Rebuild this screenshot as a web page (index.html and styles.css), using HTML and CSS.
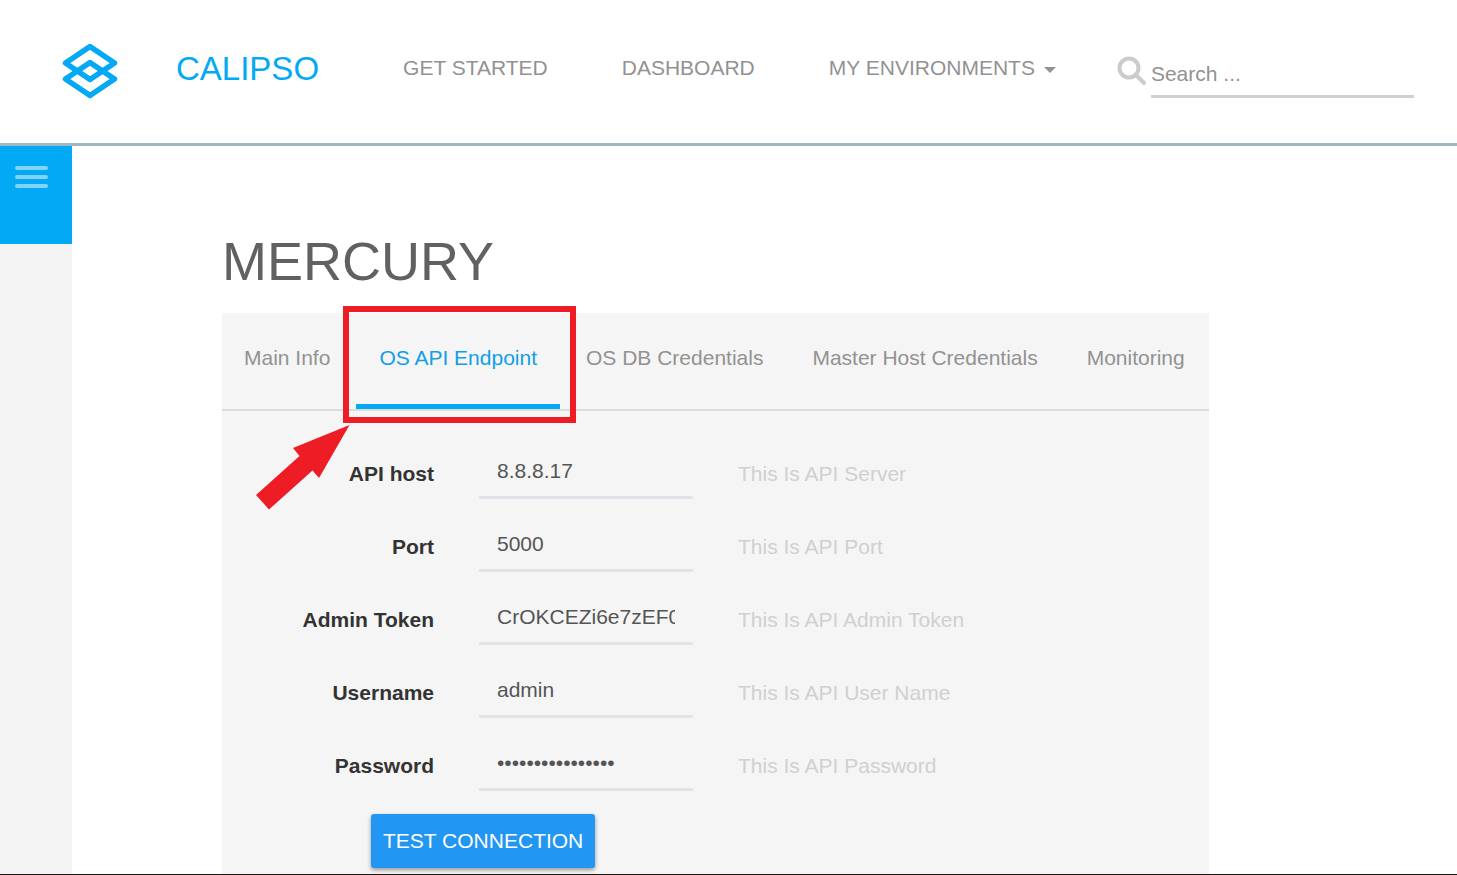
FILE: index.html
```html
<!DOCTYPE html>
<html lang="en">
<head>
<meta charset="utf-8">
<title>Calipso - Mercury</title>
<link rel="stylesheet" href="styles.css">
</head>
<body>
<header class="header">
  <a class="brand" href="#">
    <svg class="brand-logo" width="56" height="56" viewBox="0 0 56 56" fill="none" stroke="currentColor" stroke-width="5.500" stroke-linejoin="round" aria-hidden="true">
      <path d="M28 3.500 52.500 20 28 36.500 3.500 20Z"/>
      <path d="M28 19.500 52.500 36 28 52.500 3.500 36Z"/>
    </svg>
    <span class="brand-name">CALIPSO</span>
  </a>
  <nav class="nav">
    <a class="nav-link" href="#">GET STARTED</a>
    <a class="nav-link" href="#">DASHBOARD</a>
    <a class="nav-link" href="#">MY ENVIRONMENTS<span class="caret"></span></a>
  </nav>
  <form class="search">
    <svg class="search-icon" width="30" height="30" viewBox="0 0 30 30" fill="none" stroke="currentColor" aria-hidden="true">
      <circle cx="12" cy="12" r="9.500" stroke-width="4"/>
      <path d="M18.500 18.500 27 27" stroke-width="4" stroke-linecap="round"/>
    </svg>
    <input class="search-input" type="text" placeholder="Search ..." aria-label="Search">
  </form>
</header>
<div class="page">
  <aside class="sidebar">
    <button class="menu-button" type="button" aria-label="Menu">
      <span class="menu-line"></span><span class="menu-line"></span><span class="menu-line"></span>
    </button>
  </aside>
  <main class="main">
    <h1 class="title">MERCURY</h1>
    <section class="panel">
      <div class="tabs" role="tablist">
        <button class="tab tab-first" type="button" role="tab">Main Info</button>
        <div class="tab-current">
          <button class="tab tab-active" type="button" role="tab" aria-selected="true">OS API Endpoint</button>
          <span class="highlight"></span>
          <svg class="arrow" width="94" height="85" viewBox="0 0 94 85" aria-hidden="true">
            <path d="M93.500 0 37 23 43.500 31 0 70 13 84.500 56.500 45.500 63 53Z" fill="currentColor"/>
          </svg>
        </div>
        <button class="tab" type="button" role="tab">OS DB Credentials</button>
        <button class="tab" type="button" role="tab">Master Host Credentials</button>
        <button class="tab" type="button" role="tab">Monitoring</button>
      </div>
      <form class="form">
        <div class="row">
          <label class="label" for="host">API host</label>
          <input class="field" id="host" type="text" value="8.8.8.17">
          <span class="hint">This Is API Server</span>
        </div>
        <div class="row">
          <label class="label" for="port">Port</label>
          <input class="field" id="port" type="text" value="5000">
          <span class="hint">This Is API Port</span>
        </div>
        <div class="row">
          <label class="label" for="token">Admin Token</label>
          <input class="field" id="token" type="text" value="CrOKCEZi6e7zEF0">
          <span class="hint">This Is API Admin Token</span>
        </div>
        <div class="row">
          <label class="label" for="user">Username</label>
          <input class="field" id="user" type="text" value="admin">
          <span class="hint">This Is API User Name</span>
        </div>
        <div class="row">
          <label class="label" for="password">Password</label>
          <input class="field" id="password" type="password" value="abcdefghijklmnop">
          <span class="hint">This Is API Password</span>
        </div>
        <button class="test-button" type="button">TEST CONNECTION</button>
      </form>
    </section>
  </main>
</div>
</body>
</html>
```
FILE: styles.css
```css
* {
  box-sizing: border-box;
}

body {
  display: flex;
  flex-direction: column;
  min-height: 100vh;
  margin: 0;
  border-bottom: 1px solid #1c170c;
  background: #fff;
  color: #929292;
  font-family: "Liberation Sans", Arial, sans-serif;
  font-size: 21px;
  line-height: 24px;
}

button,
input {
  border: 0;
  background: none;
  color: inherit;
  font: inherit;
}

.header {
  display: flex;
  align-items: center;
  padding: 43px 43px 44px 62px;
  border-bottom: 3px solid #a0b7bf;
}

.brand {
  display: flex;
  align-items: center;
  gap: 58px;
  color: #03a9f4;
  text-decoration: none;
}

.brand-logo {
  display: block;
}

.brand-name {
  padding-bottom: 4px;
  font-size: 33px;
  line-height: 40px;
}

.nav {
  display: flex;
  gap: 74px;
  padding-bottom: 6px;
  margin-left: 84px;
}

.nav-link {
  color: inherit;
  text-decoration: none;
  white-space: nowrap;
}

.caret {
  display: inline-block;
  margin-left: 9px;
  border: 6px solid transparent;
  border-top-color: currentColor;
  border-bottom: 0;
  vertical-align: 2px;
}

.search {
  display: flex;
  flex: 1;
  align-items: center;
  gap: 4px;
  min-width: 0;
  margin-left: 61px;
}

.search-icon {
  flex: none;
  color: #cbcbcb;
}

.search-input {
  flex: 1;
  min-width: 0;
  height: 54px;
  padding: 8px 0 0;
  border-bottom: 3px solid #d0d0d0;
}

.search-input::placeholder {
  color: #929292;
  opacity: 1;
}

.page {
  display: flex;
  flex: 1;
}

.sidebar {
  flex: none;
  width: 72px;
  background: #f4f4f4;
}

.menu-button {
  display: flex;
  flex-direction: column;
  gap: 5px;
  width: 100%;
  height: 98px;
  padding: 20px 24px 0 15px;
  background: #03a9f4;
}

.menu-line {
  width: 100%;
  height: 4px;
  border-radius: 2px;
  background: #80d4f9;
}

.main {
  display: flex;
  flex: 1;
  flex-direction: column;
  padding: 84px 248px 0 150px;
}

.title {
  margin: 0;
  color: #616161;
  font-size: 54px;
  font-weight: 400;
  line-height: 62px;
}

.panel {
  flex: 1;
  margin-top: 21px;
  background: #f5f5f5;
}

.tabs {
  display: flex;
  gap: 3px;
  border-bottom: 2px solid #dcdcdc;
}

.tab {
  height: 96px;
  padding: 0 23px 7px;
  white-space: nowrap;
}

.tab-first {
  padding-left: 22px;
}

.tab-current {
  position: relative;
}

.tab-active {
  padding-bottom: 2px;
  border-bottom: 5px solid #03a9f4;
  color: #119fe8;
}

.highlight {
  position: absolute;
  inset: -7px -16px -14px -13px;
  border: 6px solid #ee1c24;
}

.arrow {
  position: absolute;
  top: 112px;
  left: -100px;
  color: #ee1c24;
}

.form {
  display: flex;
  flex-direction: column;
  gap: 19px;
  padding: 34px 0 6px;
}

.row {
  display: grid;
  grid-template-columns: 212fr 214fr 471fr;
  gap: 45px;
  align-items: center;
}

.label {
  padding-top: 3px;
  color: #333;
  font-weight: 700;
  text-align: right;
}

.field {
  width: 100%;
  min-width: 0;
  height: 54px;
  padding: 1px 18px 0;
  border-bottom: 3px solid #e2e3e9;
  color: #555;
}

.hint {
  padding-top: 3px;
  color: #d0d0d0;
}

.test-button {
  align-self: flex-start;
  height: 54px;
  margin: 4px 0 0 149px;
  padding: 0 12px;
  border-radius: 3px;
  background: #2196f3;
  box-shadow: 0 2px 4px rgba(0, 0, 0, 0.4);
  color: #fff;
}
```
